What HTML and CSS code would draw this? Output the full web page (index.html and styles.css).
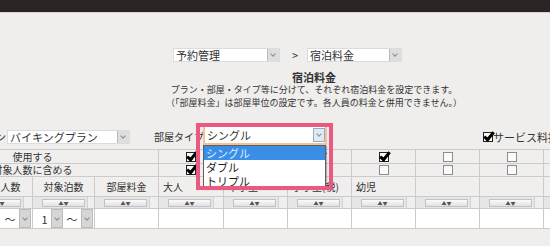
FILE: index.html
```html
<!DOCTYPE html>
<html lang="ja">
<head>
    <meta charset="UTF-8">
    <meta name="viewport" content="width=device-width, initial-scale=1.0">
    <title>宿泊料金</title>
    <link rel="stylesheet" href="styles.css">
</head>
<body>

<div class="topbar"></div>

<!-- Breadcrumb selects -->
<div class="crumbs">
    <div class="sel sel-menu"><span class="sel-text">予約管理</span><span class="sel-btn"></span></div>
    <span class="crumb-sep">&gt;</span>
    <div class="sel sel-page"><span class="sel-text">宿泊料金</span><span class="sel-btn"></span></div>
</div>

<div class="intro">
    <h1>宿泊料金</h1>
    <p>プラン・部屋・タイプ等に分けて、それぞれ宿泊料金を設定できます。</p>
    <p>（「部屋料金」は部屋単位の設定です。各人員の料金と併用できません。）</p>
</div>

<!-- Plan / room type filters -->
<div class="filters">
    <span class="filter-label plan-label">宿泊プラン</span>
    <div class="sel sel-plan"><span class="sel-text">バイキングプラン</span><span class="sel-btn"></span></div>
    <span class="filter-label room-label">部屋タイプ</span>
    <div class="room-pick">
        <div class="sel sel-room"><span class="sel-text">シングル</span><span class="sel-btn"></span></div>
        <ul class="sel-list">
            <li class="active">シングル</li>
            <li>ダブル</li>
            <li>トリプル</li>
        </ul>
        <div class="mark"></div>
    </div>
    <label class="service"><span class="cb on"></span>サービス料掛</label>
</div>

<!-- Rate table -->
<div class="rate-grid">
    <div class="cell cell-label">使用する</div>
    <div class="cell"><span class="cb on"></span></div>
    <div class="cell"><span class="cb on"></span></div>
    <div class="cell"><span class="cb on"></span></div>
    <div class="cell"><span class="cb on"></span></div>
    <div class="cell"><span class="cb"></span></div>
    <div class="cell"><span class="cb"></span></div>
    <div class="cell"><span class="cb"></span></div>

    <div class="cell cell-label">対象人数に含める</div>
    <div class="cell"><span class="cb on"></span></div>
    <div class="cell"><span class="cb on"></span></div>
    <div class="cell"><span class="cb"></span></div>
    <div class="cell"><span class="cb"></span></div>
    <div class="cell"><span class="cb"></span></div>
    <div class="cell"><span class="cb"></span></div>
    <div class="cell"><span class="cb"></span></div>

    <div class="cell">部屋数</div>
    <div class="cell">対象人数</div>
    <div class="cell">対象泊数</div>
    <div class="cell">部屋料金</div>
    <div class="cell cell-left">大人</div>
    <div class="cell cell-left">中学生</div>
    <div class="cell cell-left">小学生(税)</div>
    <div class="cell cell-left">幼児</div>
    <div class="cell"></div>
    <div class="cell"></div>
    <div class="cell"></div>

    <div class="cell cell-sort"><span class="sort-btn">▲▼</span><span class="sort-gap"></span></div>
    <div class="cell cell-sort"><span class="sort-btn">▲▼</span><span class="sort-gap"></span></div>
    <div class="cell cell-sort"><span class="sort-btn">▲▼</span><span class="sort-gap"></span></div>
    <div class="cell cell-sort"><span class="sort-btn">▲▼</span><span class="sort-gap"></span></div>
    <div class="cell cell-sort"><span class="sort-btn">▲▼</span><span class="sort-gap"></span></div>
    <div class="cell cell-sort"><span class="sort-btn">▲▼</span><span class="sort-gap"></span></div>
    <div class="cell cell-sort"><span class="sort-btn">▲▼</span><span class="sort-gap"></span></div>
    <div class="cell cell-sort"><span class="sort-btn">▲▼</span><span class="sort-gap"></span></div>
    <div class="cell cell-sort"><span class="sort-btn">▲▼</span><span class="sort-gap"></span></div>
    <div class="cell cell-sort"><span class="sort-btn">▲▼</span><span class="sort-gap"></span></div>
    <div class="cell cell-sort"><span class="sort-btn">▲▼</span><span class="sort-gap"></span></div>

    <div class="cell cell-data"></div>
    <div class="cell cell-data">
        <span class="pick-val wide">〜</span><span class="pick-btn"></span>
    </div>
    <div class="cell cell-data">
        <span class="pick-val">1</span><span class="pick-btn"></span>
        <span class="pick-val wide">〜</span><span class="pick-btn"></span>
    </div>
    <div class="cell cell-data"></div>
    <div class="cell cell-data"></div>
    <div class="cell cell-data"></div>
    <div class="cell cell-data"></div>
    <div class="cell cell-data"></div>
    <div class="cell cell-data"></div>
    <div class="cell cell-data"></div>
    <div class="cell cell-data"></div>
</div>

</body>
</html>
```

FILE: styles.css
```css
html, body {
    overflow: hidden;
}

body {
    margin: 0;
    background-color: #efeeec;
    font-family: "Noto Sans CJK JP", sans-serif;
    color: #333;
}

.topbar {
    height: 12px;
    background-color: #2a2424;
    border-bottom: 1px solid #d6d2ce;
}

/* Select boxes */
.sel {
    display: flex;
    flex-shrink: 0;
    height: 14px;
    background-color: #fff;
    border: 1px solid #dcdcdc;
    box-sizing: border-box;
}

.sel-text {
    flex: 1;
    font-size: 11px;
    line-height: 12px;
    padding-left: 2px;
    white-space: nowrap;
    overflow: hidden;
}

.sel-btn,
.pick-btn {
    position: relative;
    width: 11px;
    background-color: #dedede;
    border-left: 1px solid #b9b9b9;
}

.sel-btn::after,
.pick-btn::after {
    content: "";
    position: absolute;
    left: 3px;
    top: 3px;
    width: 3px;
    height: 3px;
    border-right: 1px solid #8c8c98;
    border-bottom: 1px solid #8c8c98;
    transform: rotate(45deg);
}

.crumbs {
    display: flex;
    align-items: center;
    height: 14px;
    padding: 35px 0 0 173px;
}

.sel-menu {
    width: 107px;
}

.sel-page {
    width: 95px;
}

.crumb-sep {
    font-size: 11px;
    line-height: 14px;
    margin: 0 9px 0 12px;
}

.intro {
    margin-top: 9px;
    padding-left: 78px;
    text-align: center;
}

.intro h1 {
    margin: 0;
    font-size: 11px;
    line-height: 12px;
    font-weight: bold;
}

.intro p {
    margin: 0;
    font-size: 9px;
    line-height: 13px;
}

/* Filters row */
.filters {
    display: flex;
    align-items: flex-start;
    height: 20px;
    margin-top: 16px;
}

.filters > * {
    flex-shrink: 0;
}

.filter-label {
    margin-top: 5px;
    font-size: 10px;
    line-height: 14px;
    white-space: nowrap;
}

.plan-label {
    width: 50px;
    margin-left: -44px;
    margin-right: 1px;
}

.sel-plan {
    width: 123px;
    margin-top: 5px;
}

.room-label {
    width: 49px;
    margin-left: 24px;
    overflow: hidden;
}

.room-pick {
    position: relative;
    width: 124px;
}

.sel-room {
    width: 124px;
    height: 20px;
    align-items: center;
    border: 2px solid #f5c296;
}

.sel-room .sel-text {
    line-height: 16px;
}

.sel-room .sel-btn {
    width: 12px;
    height: 14px;
    box-sizing: border-box;
    border: 1px solid #8eacd0;
    background-color: #e2e9f2;
}

.sel-list {
    position: absolute;
    left: 0;
    top: 20px;
    width: 123px;
    margin: 0;
    padding: 0;
    list-style: none;
    background-color: #fff;
    border: 1px solid #5e5e5e;
    box-sizing: border-box;
    box-shadow: 1px 1px 1px rgba(0, 0, 0, 0.25);
    z-index: 2;
}

.sel-list li {
    height: 14px;
    padding-left: 2px;
    font-size: 11px;
    line-height: 14px;
    color: #222;
}

.sel-list li.active {
    background-color: #3a8ee6;
    color: #dcefff;
}

/* Highlight frame drawn over the open dropdown */
.mark {
    position: absolute;
    left: -7px;
    top: -2px;
    width: 137px;
    height: 67px;
    border: 4px solid #ea5a80;
    box-sizing: border-box;
    z-index: 3;
}

.service {
    display: flex;
    align-items: center;
    margin-top: 5px;
    margin-left: 156px;
    font-size: 11px;
    line-height: 14px;
    white-space: nowrap;
}

/* Checkboxes */
.cb {
    position: relative;
    display: inline-block;
    width: 10px;
    height: 10px;
    box-sizing: border-box;
    border: 1px solid #8c8c8c;
    background-color: #fbfbfb;
}

.cb.on {
    border-color: #222;
}

.cb.on::after {
    content: "";
    position: absolute;
    left: 2px;
    top: -3px;
    width: 3px;
    height: 8px;
    border: solid #000;
    border-width: 0 3px 3px 0;
    transform: rotate(40deg);
}

/* Rate table */
.rate-grid {
    display: grid;
    grid-template-columns: 61px 63px 61px 63px 64px repeat(6, 63px);
    grid-template-rows: 13px 12px 19px 11px 19px;
    gap: 1px;
    padding: 1px;
    width: max-content;
    margin: 4px 0 0 -94px;
    background-color: #cbcbcb;
}

.cell {
    display: flex;
    align-items: center;
    justify-content: center;
    background-color: #f0efed;
    font-size: 10px;
    line-height: 12px;
    white-space: nowrap;
    overflow: hidden;
}

.cell-label {
    grid-column: span 4;
}

.cell-left {
    justify-content: flex-start;
    padding-left: 4px;
}

.cell-sort {
    justify-content: flex-start;
    align-items: stretch;
    padding-left: 9px;
    background-color: #e6e6e6;
}

.sort-btn {
    align-self: center;
    width: 43px;
    height: 8px;
    margin-right: 2px;
    box-sizing: border-box;
    border: 1px solid #c2c2c2;
    background: linear-gradient(#fafafa, #e2e2e2);
    font-size: 5px;
    line-height: 6px;
    text-align: center;
    color: #555;
}

.sort-gap {
    flex: 1;
    border-left: 1px solid #d2d2d2;
    background-color: #efefef;
}

.cell-data {
    justify-content: flex-end;
    align-items: stretch;
    padding-right: 1px;
    background-color: #fff;
}

.pick-val {
    display: flex;
    align-items: center;
    justify-content: center;
    width: 13px;
    font-size: 11px;
}

.pick-val.wide {
    width: 18px;
}

.pick-btn {
    width: 12px;
    box-sizing: border-box;
    border: 1px solid #bdbdbd;
    background-color: #d6d6d6;
}

.pick-btn::after {
    left: 3px;
    top: 6px;
}
```
